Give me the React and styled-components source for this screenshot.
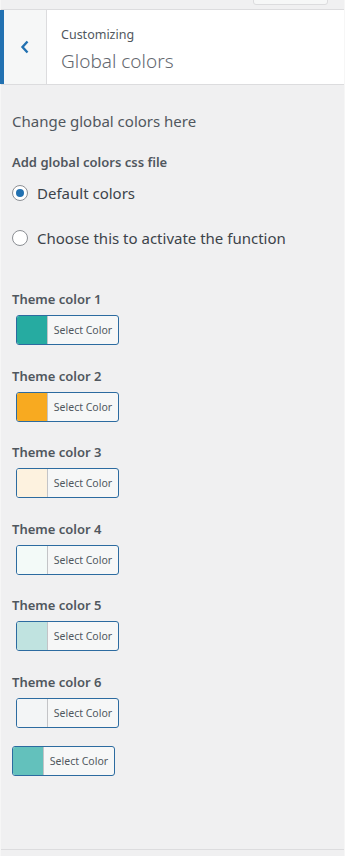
import React from 'react';
import styled, { createGlobalStyle } from 'styled-components';

const GlobalStyle = createGlobalStyle`
    html, body {
        margin: 0;
        padding: 0;
        background: #f0f0f1;
    }
    body {
        font-family: "Noto Sans", "Open Sans", sans-serif;
        color: #3c434a;
    }
`;

const Panel = styled.div`
    width: 345px;
    height: 856px;
    background: #f0f0f1;
    display: flex;
    flex-direction: column;
    box-sizing: border-box;
    border-left: 1px solid #f6f6f6;
    border-right: 1px solid #f6f6f6;
`;

const TopBar = styled.div`
    height: 9px;
    border-bottom: 1px solid #dcdcde;
    position: relative;
`;

const TopButtonEdge = styled.div`
    position: absolute;
    left: 252px;
    right: 16px;
    top: -10px;
    height: 13px;
    border: 1px solid #dcdcde;
    border-radius: 3px;
    background: #f6f7f7;
`;

const Header = styled.div`
    display: flex;
    height: 74px;
    background: #fff;
    border-bottom: 1px solid #dcdcde;
`;

const BackButton = styled.button`
    width: 47px;
    margin-left: -1px;
    border: none;
    border-left: 4px solid #2271b1;
    border-right: 1px solid #dcdcde;
    background: #f6f7f7;
    display: flex;
    align-items: center;
    justify-content: center;
    padding: 0;
    color: #2271b1;
    cursor: pointer;
`;

const TitleBlock = styled.div`
    display: flex;
    flex-direction: column;
    padding: 16px 14px 0 14px;
`;

const Eyebrow = styled.span`
    font-size: 12.5px;
    line-height: 18px;
    color: #50575e;
`;

const Title = styled.h3`
    margin: 5px 0 0 0;
    font-size: 19px;
    line-height: 24px;
    font-weight: 300;
    color: #646970;
`;

const Content = styled.div`
    padding: 26px 12px 0 11px;
    display: flex;
    flex-direction: column;
`;

const Description = styled.p`
    margin: 0 0 22px 0;
    font-size: 15px;
    line-height: 20px;
    color: #50575e;
`;

const FieldLabel = styled.div`
    font-size: 13px;
    line-height: 18px;
    font-weight: 600;
    color: #50575e;
    margin-bottom: ${(p) => p.$gap || 7}px;
`;

const RadioRow = styled.label`
    display: flex;
    align-items: center;
    gap: 9px;
    height: 24px;
    margin-bottom: ${(p) => p.$gap || 0}px;
    font-size: 15px;
    color: #3c434a;
`;

const RadioCircle = styled.span`
    width: 16px;
    height: 16px;
    box-sizing: border-box;
    border-radius: 50%;
    border: 1px solid #8c8f94;
    background: #fff;
    display: flex;
    align-items: center;
    justify-content: center;
    flex-shrink: 0;

    &::after {
        content: '';
        width: 8px;
        height: 8px;
        border-radius: 50%;
        background: ${(p) => (p.$checked ? '#2271b1' : 'transparent')};
    }
`;

const ColorGroup = styled.div`
    display: flex;
    flex-direction: column;
    margin-bottom: 21.6px;
`;

const ColorButton = styled.button`
    display: flex;
    align-items: stretch;
    width: 103px;
    height: 30px;
    margin-left: ${(p) => (p.$flush ? 0 : 4)}px;
    margin-top: ${(p) => (p.$flush ? -4 : 0)}px;
    padding: 0;
    box-sizing: border-box;
    border: 1px solid #2c6ba0;
    border-radius: 3px;
    background: #f6f7f7;
    overflow: hidden;
    cursor: pointer;
`;

const Swatch = styled.span`
    width: 30px;
    background: ${(p) => p.$color};
    border-right: 1px solid #c3c4c7;
`;

const ButtonText = styled.span`
    flex: 1;
    display: flex;
    align-items: center;
    justify-content: center;
    font-family: "Noto Sans", "Open Sans", sans-serif;
    font-size: 10.5px;
    color: #50575e;
`;

const Footer = styled.div`
    margin-top: auto;
    margin-bottom: 6px;
    border-top: 1px solid #dcdcde;
`;

const themeColors = ['#26aba1', '#f8aa20', '#fdf2df', '#f3faf8', '#c0e3e0', '#f3f5f6'];

const App = () => {
    return (
        <Panel>
            <GlobalStyle />
            <TopBar>
                <TopButtonEdge />
            </TopBar>
            <Header>
                <BackButton aria-label="Back">
                    <svg width="10" height="14" viewBox="0 0 10 14">
                        <path d="M7.5 1.5 L2.5 7 L7.5 12.5" fill="none" stroke="#2271b1" strokeWidth="2.4" />
                    </svg>
                </BackButton>
                <TitleBlock>
                    <Eyebrow>Customizing</Eyebrow>
                    <Title>Global colors</Title>
                </TitleBlock>
            </Header>
            <Content>
                <Description>Change global colors here</Description>
                <FieldLabel $gap={10}>Add global colors css file</FieldLabel>
                <RadioRow $gap={21}>
                    <RadioCircle $checked />
                    Default colors
                </RadioRow>
                <RadioRow $gap={40}>
                    <RadioCircle />
                    Choose this to activate the function
                </RadioRow>
                {themeColors.map((color, i) => (
                    <ColorGroup key={color}>
                        <FieldLabel>Theme color {i + 1}</FieldLabel>
                        <ColorButton>
                            <Swatch $color={color} />
                            <ButtonText>Select Color</ButtonText>
                        </ColorButton>
                    </ColorGroup>
                ))}
                <ColorButton $flush>
                    <Swatch $color="#63c1bc" />
                    <ButtonText>Select Color</ButtonText>
                </ColorButton>
            </Content>
            <Footer />
        </Panel>
    );
};

export default App;
